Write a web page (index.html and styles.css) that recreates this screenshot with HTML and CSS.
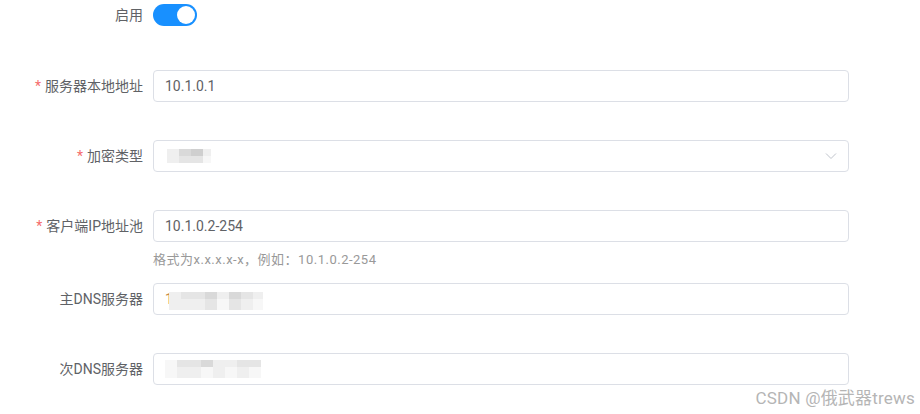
FILE: index.html
```html
<!DOCTYPE html>
<html lang="zh">
<head>
<meta charset="utf-8">
<link rel="stylesheet" href="styles.css">
</head>
<body>
<form class="form">
  <div class="row row-switch">
    <label class="label">启用</label>
    <div class="control">
      <span class="switch"><span class="knob"></span></span>
    </div>
  </div>
  <div class="row">
    <label class="label"><span class="req">*</span>服务器本地地址</label>
    <div class="control">
      <div class="input"><span class="val">10.1.0.1</span></div>
    </div>
  </div>
  <div class="row">
    <label class="label"><span class="req">*</span>加密类型</label>
    <div class="control">
      <div class="input select">
        <div class="mosaic mosaic-a">
          <div class="mrow"><span class="c w12 s1"></span><span class="c w12 s3"></span><span class="c w12 s4"></span><span class="c w8 s1"></span></div>
          <div class="mrow"><span class="c w12 s1"></span><span class="c w12 s2"></span><span class="c w12 s2"></span><span class="c w8 s0"></span></div>
        </div>
        <svg class="arrow" width="12" height="8" viewBox="0 0 12 8"><path d="M1 1.5 L6 6.5 L11 1.5" fill="none" stroke="#c0c4cc" stroke-width="1"/></svg>
      </div>
    </div>
  </div>
  <div class="row row-hint">
    <label class="label"><span class="req">*</span>客户端IP地址池</label>
    <div class="control">
      <div class="input"><span class="val">10.1.0.2-254</span></div>
      <div class="hint">格式为x.x.x.x-x，例如：10.1.0.2-254</div>
    </div>
  </div>
  <div class="row">
    <label class="label">主DNS服务器</label>
    <div class="control">
      <div class="input">
        <div class="mosaic mosaic-b">
          <span class="lead">1</span>
          <div class="mcols">
            <div class="mrow"><span class="c w12 s1"></span><span class="c w12 s2"></span><span class="c w12 s2"></span><span class="c w12 s3"></span><span class="c w12 s1"></span><span class="c w12 s3"></span><span class="c w12 s2"></span><span class="c w10 s1"></span></div>
            <div class="mrow tall"><span class="c w12 s1"></span><span class="c w12 s1"></span><span class="c w12 s1"></span><span class="c w12 s2"></span><span class="c w12 s0"></span><span class="c w12 s2"></span><span class="c w12 s1"></span><span class="c w10 s0"></span></div>
          </div>
        </div>
      </div>
    </div>
  </div>
  <div class="row">
    <label class="label">次DNS服务器</label>
    <div class="control">
      <div class="input">
        <div class="mosaic mosaic-c">
          <div class="mrow"><span class="c w12 s0"></span><span class="c w12 s2"></span><span class="c w12 s2"></span><span class="c w12 s3"></span><span class="c w12 s1"></span><span class="c w12 s1"></span><span class="c w12 s2"></span><span class="c w12 s2"></span></div>
          <div class="mrow tall"><span class="c w12 s0"></span><span class="c w12 s1"></span><span class="c w12 s1"></span><span class="c w12 s0"></span><span class="c w12 s1"></span><span class="c w12 s0"></span><span class="c w12 s1"></span><span class="c w12 s0"></span></div>
        </div>
      </div>
    </div>
  </div>
</form>
<div class="watermark">CSDN @俄武器trews</div>
</body>
</html>
```

FILE: styles.css
```css
html, body {
  margin: 0;
  padding: 0;
  background: #ffffff;
  width: 920px;
  height: 414px;
  overflow: hidden;
  position: relative;
  font-family: Roboto, "Noto Sans CJK SC", sans-serif;
}

.form {
  display: flex;
  flex-direction: column;
}

.row {
  display: flex;
  align-items: flex-start;
  margin-bottom: 38px;
}

.row-switch {
  height: 30px;
  align-items: center;
  margin-bottom: 40px;
}

.row-hint {
  margin-bottom: 13px;
}

.label {
  width: 143px;
  padding-right: 10px;
  box-sizing: content-box;
  text-align: right;
  font-size: 14px;
  line-height: 32px;
  color: #606266;
  white-space: nowrap;
}

.row-switch .label {
  line-height: 30px;
}

.req {
  color: #f56c6c;
  margin-right: 4px;
}

.control {
  width: 696px;
}

.switch {
  display: flex;
  align-items: center;
  justify-content: flex-end;
  width: 44px;
  height: 22px;
  border-radius: 11px;
  background: #1890ff;
  box-sizing: border-box;
  padding: 0 2px;
}

.knob {
  width: 18px;
  height: 18px;
  border-radius: 50%;
  background: #ffffff;
}

.input {
  height: 32px;
  box-sizing: border-box;
  border: 1px solid #dcdfe6;
  border-radius: 4px;
  background: #fff;
  display: flex;
  align-items: center;
  padding: 0 11px;
  font-size: 14px;
  color: #606266;
}

.select {
  justify-content: space-between;
}

.hint {
  margin-top: 8px;
  font-size: 13px;
  line-height: 20px;
  color: #999999;
  letter-spacing: 0.5px;
}

.mosaic {
  display: flex;
  flex-direction: column;
}

.mosaic-a {
  margin-left: 2px;
}

.mosaic-b {
  flex-direction: row;
  align-items: center;
}

.lead {
  font-size: 14px;
  color: #c98a4a;
}

.mcols {
  display: flex;
  flex-direction: column;
  margin-top: 4px;
  margin-left: -4px;
}

.mrow {
  display: flex;
  height: 7px;
}

.mrow.tall {
  height: 11px;
}

.c {
  display: block;
  height: 100%;
}

.w8 { width: 8px; }
.w10 { width: 10px; }
.w12 { width: 12px; }

.s0 { background: #f7f7f7; }
.s1 { background: #efefef; }
.s2 { background: #e5e5e5; }
.s3 { background: #d9d9d9; }
.s4 { background: #cfcfcf; }

.watermark {
  position: absolute;
  right: 5px;
  bottom: 5px;
  font-size: 17px;
  letter-spacing: 0.2px;
  color: #b5b5b5;
  font-family: Roboto, "Noto Sans CJK SC", sans-serif;
  white-space: nowrap;
}
```
